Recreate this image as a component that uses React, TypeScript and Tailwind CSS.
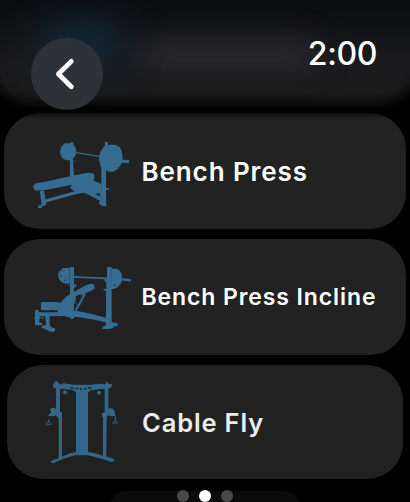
import type { ReactNode } from 'react';

function BenchPressIcon() {
  return (
    <svg viewBox="0 0 330 255" className="mt-[3px] h-[85px] w-[110px] shrink-0 fill-[#366b92] stroke-[#366b92]">
      <g stroke="none">
        {/* plates and bar ends */}
        <path d="M118 40h18l10 5 6 9 2 11-3 13-8 9-9 4h-10l-10-5-7-9-2-12 3-13z" />
        <path d="M238 48l14-4h20l12 8 6 11 3 20-4 19-10 14-14 9h-14l-12-6-12-9-5-22 4-23z" />
        <path d="M137 36h8v10h-8zM240 36h9v12h-9zM288 89h24v9h-24zM305 91h7v9h-7z" />
        {/* uprights */}
        <path d="M135 86h9l3 54h-12zM229 112h14v106h-14z" />
        <path d="M226 211h17v10l2 6-8 2-11-4-5-6z" />
        {/* bench */}
        <path d="M27 164l6-4 28-5 40-9 40-9 32-6 14-3 16 2 5 5v11l-4 5 26 12v52l-52-27-24 4-8-10-10-9 5-9-84 17h-15l-10 1-8-9z" />
        <path d="M44 182h13l7 39-1 5-11 3-3 5H39v-6l11-4z" />
        <path d="M228 174h24v5h-24z" />
      </g>
      <path d="M61 213l98-27" strokeWidth="10" fill="none" />
      <path d="M211 192l14-2v8l-5-1z" stroke="none" className="fill-[#222]" />
      <path d="M152 68l73 11" strokeWidth="4" fill="none" />
      <path d="M145 93h5M150 90v5" strokeWidth="2.5" fill="none" opacity=".6" />
    </svg>
  );
}

function BenchInclineIcon() {
  return (
    <svg viewBox="0 0 330 255" className="mt-px h-[85px] w-[110px] shrink-0 fill-[#366b92] stroke-[#366b92]">
      <g stroke="none">
        {/* plates */}
        <path d="M114 39h20v46l-10 2-12-4-9-9-4-12 3-12z" />
        <path d="M260 41h14l10 6 6 10 1 18-5 13-9 9-9 5h-10z" />
        {/* uprights */}
        <path d="M135 36h12v26h11v5h-11v24l7-4v7l-7 5v90l-6 4-6-4z" />
        <path d="M246 36h14v174h-17V107h-7v-6h8V83l-7-9 9-5z" />
        {/* seat and backrest */}
        <path d="M48 144l5-3h45l7 3 5 6-12 16H50l-2-4z" />
        <path d="M97 174l4-22 10-14 14-14 28-17 25-14 19-7 9 2 3 7-1 7-10 6-15 6-24 14-8 10-15 38-10 2z" />
        {/* base */}
        <path d="M30 165h11v7h80l32-5 35 7 55 14v14l-48-10-42-7-12 4-26-6-50 1H30z" />
        <path d="M30 174h12v11h5v6h-4v11l9 3v4l-10 2H30zM60 178h14v33l4 5 12 4v8l-7 3-13-3-8-6-12-3v-6l13-4z" />
        <path d="M243 205l17-3 18 2v8l-14 3v4l-10 3h-22v-6l11-5z" />
        <path d="M27 187h5v4h-5zM51 185h4v8h-4zM76 158h11v5H76z" />
      </g>
      <path d="M152 124l18-8-18 33z" stroke="none" className="fill-[#222]" />
      <path d="M152 167l28-51" strokeWidth="6" fill="none" />
      <path d="M152 142l5 8" strokeWidth="3" fill="none" />
      <path d="M146 66l98 4" strokeWidth="5" fill="none" />
      <path d="M288 74h13l17 2" strokeWidth="7" fill="none" />
      <path d="M128 87l8 6" strokeWidth="3" fill="none" />
      <path d="M109 49l5-3M106 60l3 5M117 77l6-3M265 91h7M78 168h9" strokeWidth="2.5" fill="none" className="stroke-[#222]" />
    </svg>
  );
}

function CableFlyIcon() {
  return (
    <svg viewBox="0 0 285 300" className="h-[100px] w-[95px] shrink-0 fill-[#33668b] stroke-[#33668b]">
      <g stroke="none">
        {/* top frame */}
        <path d="M54 35l6-3v-5h7v5l8 3v10l-7 6-14-5zM210 35h3v-5h6v5l11 1v9l-7 4-13 3z" />
        <path d="M75 38l10-4 30 4h50l30-3 15 2v13l-18 2-24 3-9 6h-36l-8-6-23-4-17-1z" />
        {/* center weight stack */}
        <path d="M123 57h36v190h-36z" />
        {/* side columns */}
        <path d="M63 45h12v75h6v138H71V138l-8-6zM209 45h11v80l-5 13-1 118h-10V138l-3-4v-10l8-4z" />
        {/* pulleys */}
        <path d="M45 112l6-5h8l6 9v12l-8 5-16-1 1-6 6-4zM217 113l6-5 10 2 5 5 2 8-1 9-8 1-12-3-4-6z" />
        <circle cx="90" cy="61" r="6" />
        <circle cx="192" cy="62" r="6" />
        {/* feet */}
        <path d="M48 268l8-5 12-3 12-6 26-10 18-4h35l20 4 41 12 17 5 1 6-8 3-12-4-24-7-35-9h-40l-34 10-18 8-11 6-7-1z" />
      </g>
      <path d="M107 48h9M121 50h8M134 51h7M147 50h8M160 48h9" className="stroke-[#212121]" strokeWidth="4" />
      <path d="M45 128l-5 4M41 142v8M238 125l3 6v16" strokeWidth="3" fill="none" />
      <path d="M34 157l7-9 8 9zM232 153l8-7 8 7z" strokeWidth="2.5" fill="none" />
    </svg>
  );
}

function ExerciseCard({ icon, label, className }: { icon: ReactNode; label: string; className: string }) {
  return (
    <button className={`flex shrink-0 items-center whitespace-nowrap text-left font-semibold leading-none ${className}`}>
      {icon}
      <span className="pt-px">{label}</span>
    </button>
  );
}

function Header() {
  return (
    <header className="relative flex h-[113px] shrink-0 items-start justify-between overflow-hidden pl-[31px] pr-[33px]">
      {/* previous row, blurred under the status bar */}
      <div className="absolute -inset-x-3 -top-10 bottom-[11px] rounded-b-[44px] bg-linear-to-b from-[#0b0c10] from-30% via-[#1a1a1d] via-70% to-[#1b1b1c] blur-[6px]" />
      <div className="absolute left-[140px] top-[40px] h-[28px] w-[180px] rounded-full bg-[#37353b]/60 blur-[14px]" />
      <div className="absolute left-[40px] top-[20px] h-[46px] w-[84px] rounded-full bg-[#122b3b]/90 blur-[18px]" />

      <button className="relative mt-[38px] flex size-[72px] items-center justify-center rounded-full bg-linear-to-b from-[#2b343a] to-[#2e3135]">
        <svg viewBox="0 0 72 72" className="size-[72px] fill-none stroke-white">
          <path d="M40.3 23.4L27.4 36l12.9 12.7" strokeWidth="4.8" strokeLinecap="round" strokeLinejoin="round" />
        </svg>
      </button>
      <time className="relative mt-[37.5px] text-[32px] font-medium leading-8 tracking-[-0.4px]">2:00</time>
    </header>
  );
}

export default function App() {
  return (
    <main className="relative flex h-[502px] w-[410px] flex-col overflow-hidden bg-black font-['Inter',sans-serif] text-white">
      <Header />
      <div className="flex flex-col items-center gap-[10px]">
        <ExerciseCard
          icon={<BenchPressIcon />}
          label="Bench Press"
          className="h-[116px] w-[402px] gap-[6.5px] rounded-[36px] bg-linear-to-b from-[#101010] to-[#222] to-[6px] pl-[21px] text-[26px] tracking-[0.9px]"
        />
        <ExerciseCard
          icon={<BenchInclineIcon />}
          label="Bench Press Incline"
          className="h-[116px] w-[402px] gap-[6.5px] rounded-[36px] bg-[#222] pl-[21px] text-[23px] tracking-[0.9px]"
        />
        <ExerciseCard
          icon={<CableFlyIcon />}
          label="Cable Fly"
          className="h-[114px] w-[396px] gap-[12px] rounded-[36px] bg-[#212121] pl-[28px] text-[25.5px] tracking-[0.85px] text-[#ececec]"
        />
      </div>
      <div className="mx-auto mt-[12px] h-[60px] w-[190px] shrink-0 rounded-[16px] bg-[#0b0b0b]" />

      {/* page dots */}
      <div className="absolute bottom-0 left-[177px] flex gap-[10px]">
        <span className="size-3 rounded-full bg-[#484848]" />
        <span className="size-3 rounded-full bg-white" />
        <span className="size-3 rounded-full bg-[#484848]" />
      </div>
    </main>
  );
}
